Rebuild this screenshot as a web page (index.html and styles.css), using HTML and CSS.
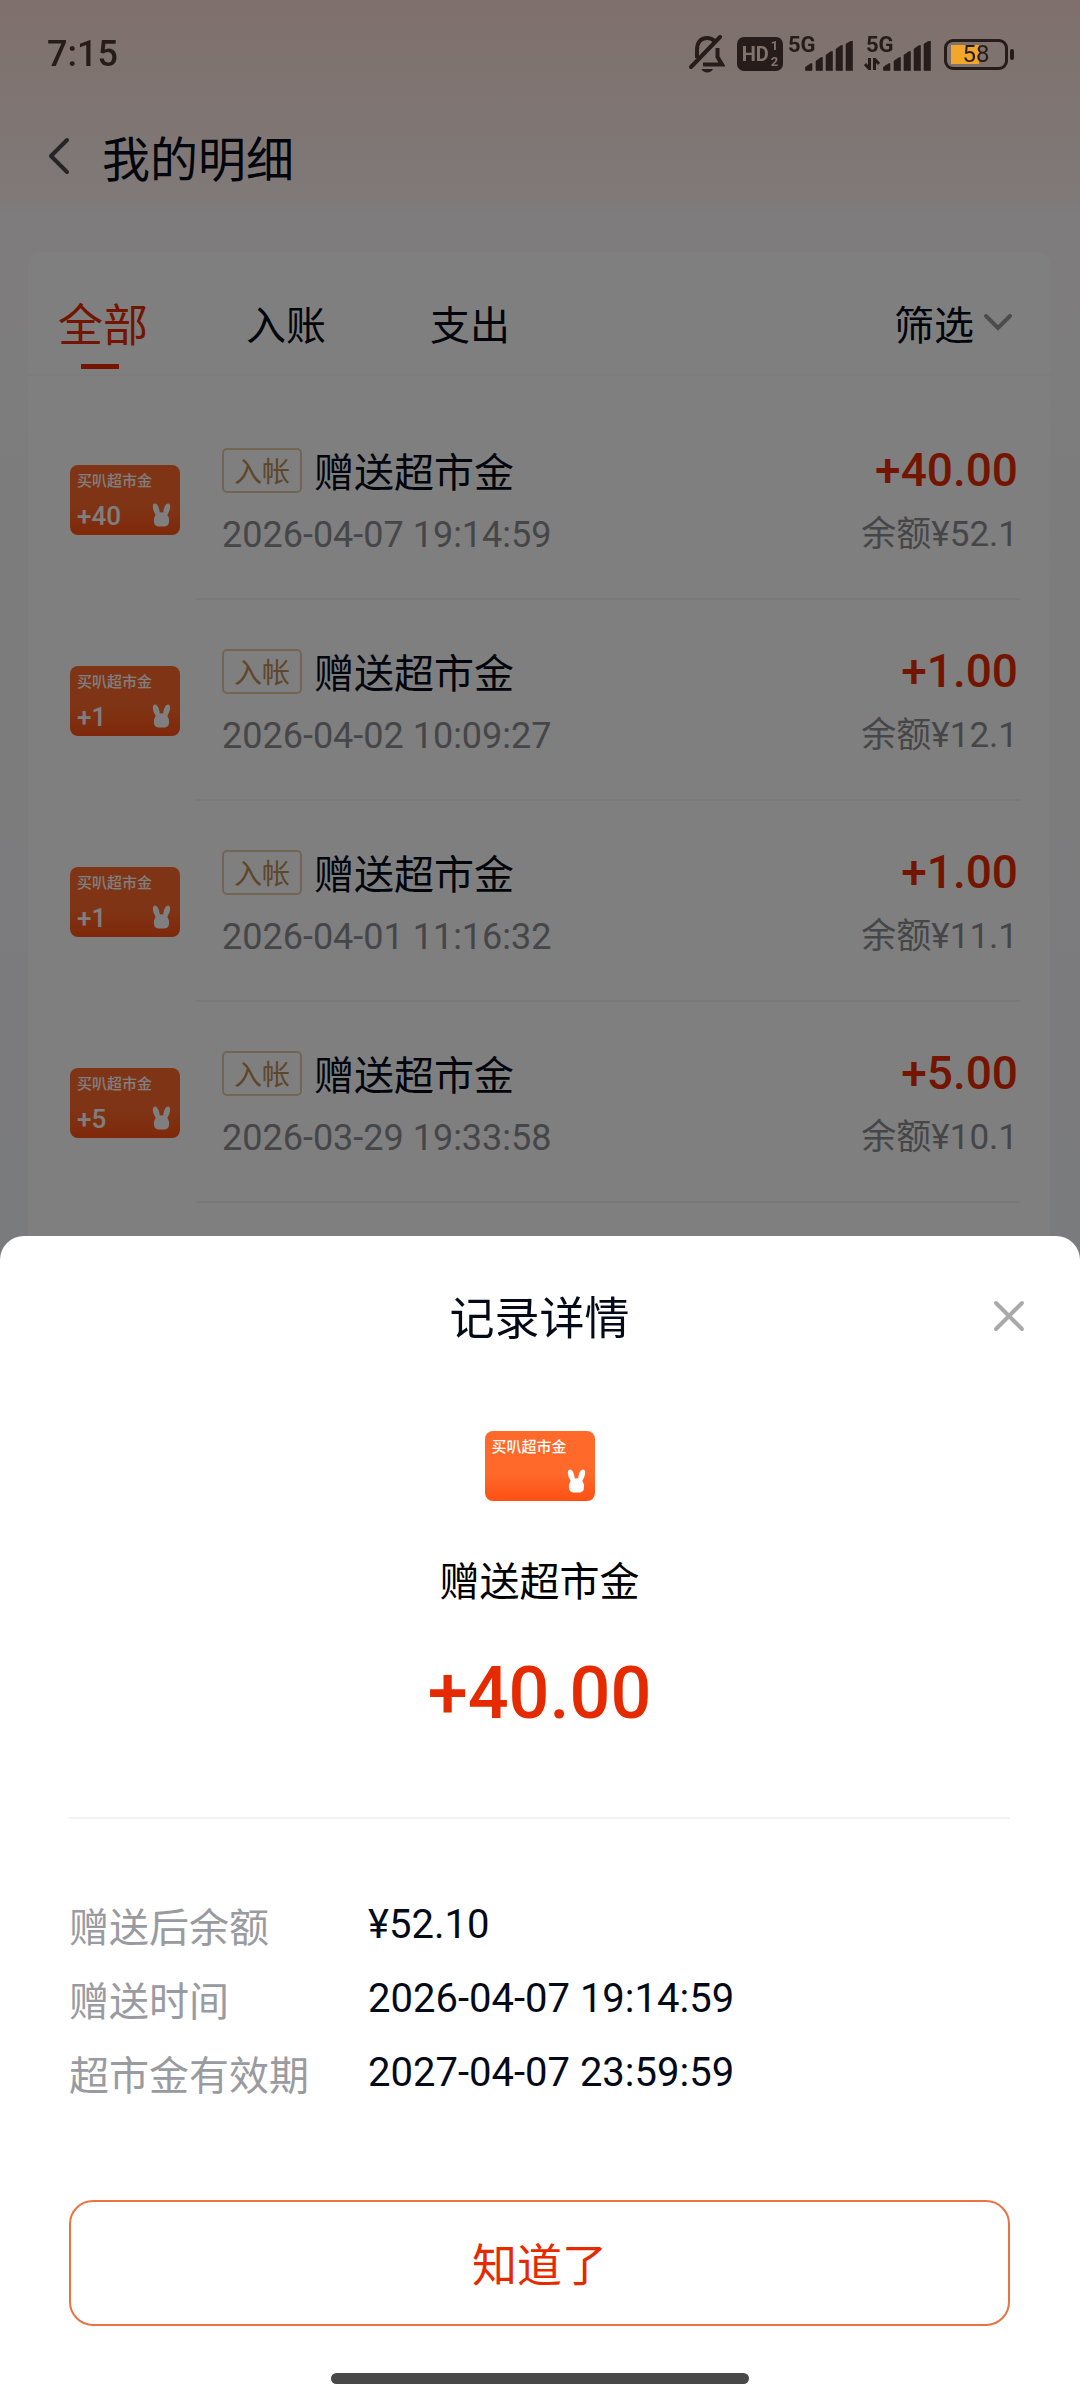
FILE: index.html
```html
<!DOCTYPE html>
<html lang="zh-CN">
<head>
  <meta charset="UTF-8" />
  <meta name="viewport" content="width=device-width, initial-scale=1.0" />
  <title>我的明细</title>
  <link rel="stylesheet" href="styles.css">
</head>
<body>
  <!-- shared shapes -->
  <svg class="sprite" aria-hidden="true">
    <symbol id="rabbit" viewBox="0 0 20 24">
      <path d="M3.200 0.600C5.600 0.200 7.600 4 8.300 9.600Q10 9 11.700 9.600C12.400 4 14.400 0.200 16.800 0.600C19.600 1.200 19.200 6.500 15.800 12C17.600 14.500 18 17 17.300 20C16.700 22.800 15 23.600 10 23.600S3.300 22.800 2.700 20C2 17 2.400 14.500 4.200 12C0.800 6.500 0.400 1.200 3.200 0.600Z" fill="#fff"/>
    </symbol>
    <symbol id="bars" viewBox="0 0 48 30">
      <path d="M0.500 29.500V26L6 22.500H7V29.500ZM11 29.500V20L16 16.500H17.500V29.500ZM21 29.500V14L26 10.500H27.500V29.500ZM31 29.500V8L36 4.500H37.500V29.500ZM41 29.500V3L46 0H47.500V29.500Z" fill="currentColor" stroke="currentColor" stroke-width="0.600"/>
    </symbol>
  </svg>

  <div class="status-bar">
    <span class="time">7:15</span>
    <div class="status-icons">
      <svg class="bell" viewBox="0 0 36 38" fill="none" stroke="currentColor" stroke-width="4">
        <path d="M8 23V15C8 7 12 3 18 3C21 3 23.500 4 25.500 6M28.500 13V22L33 29.500H14"/>
        <path d="M2 32L31 2" stroke-linecap="round"/>
        <path d="M12.500 34H24C22.500 38.500 14 38.500 12.500 34Z" fill="currentColor" stroke="none"/>
      </svg>
      <span class="hd">HD<span class="hd-nums"><span>1</span><span>2</span></span></span>
      <div class="signal">
        <span class="net">5G</span>
        <svg class="bars"><use href="#bars"/></svg>
      </div>
      <div class="signal">
        <span class="net">5G</span>
        <svg class="arrows" viewBox="0 0 16 12" fill="none" stroke="currentColor" stroke-width="3">
          <path d="M5.500 0V11L1 6M10.500 12V1L15 6"/>
        </svg>
        <svg class="bars"><use href="#bars"/></svg>
      </div>
      <div class="battery"><span class="level">58</span></div>
    </div>
  </div>

  <main class="page">
    <header class="page-header">
      <button class="back" aria-label="返回">
        <svg viewBox="0 0 22 38" fill="none" stroke="currentColor" stroke-width="4" stroke-linecap="round" stroke-linejoin="round"><path d="M19 3L3 19L19 35"/></svg>
      </button>
      <h1>我的明细</h1>
    </header>

    <section class="card">
      <nav class="tabs">
        <button class="tab active">全部</button>
        <button class="tab">入账</button>
        <button class="tab">支出</button>
        <button class="filter">筛选
          <svg viewBox="0 0 28 18" fill="none" stroke="currentColor" stroke-width="4" stroke-linecap="round"><path d="M2 2L14 14L26 2"/></svg>
        </button>
      </nav>

      <ul class="records">
        <li class="record">
          <div class="gift"><span class="gift-name">买叭超市金</span><span class="gift-num">+40</span><svg class="rabbit"><use href="#rabbit"/></svg></div>
          <div class="info">
            <div class="line"><span class="name"><span class="tag">入帐</span>赠送超市金</span><span class="amount">+40.00</span></div>
            <div class="line sub"><span>2026-04-07 19:14:59</span><span class="balance">余额¥52.1</span></div>
          </div>
        </li>
        <li class="record">
          <div class="gift"><span class="gift-name">买叭超市金</span><span class="gift-num">+1</span><svg class="rabbit"><use href="#rabbit"/></svg></div>
          <div class="info">
            <div class="line"><span class="name"><span class="tag">入帐</span>赠送超市金</span><span class="amount">+1.00</span></div>
            <div class="line sub"><span>2026-04-02 10:09:27</span><span class="balance">余额¥12.1</span></div>
          </div>
        </li>
        <li class="record">
          <div class="gift"><span class="gift-name">买叭超市金</span><span class="gift-num">+1</span><svg class="rabbit"><use href="#rabbit"/></svg></div>
          <div class="info">
            <div class="line"><span class="name"><span class="tag">入帐</span>赠送超市金</span><span class="amount">+1.00</span></div>
            <div class="line sub"><span>2026-04-01 11:16:32</span><span class="balance">余额¥11.1</span></div>
          </div>
        </li>
        <li class="record">
          <div class="gift"><span class="gift-name">买叭超市金</span><span class="gift-num">+5</span><svg class="rabbit"><use href="#rabbit"/></svg></div>
          <div class="info">
            <div class="line"><span class="name"><span class="tag">入帐</span>赠送超市金</span><span class="amount">+5.00</span></div>
            <div class="line sub"><span>2026-03-29 19:33:58</span><span class="balance">余额¥10.1</span></div>
          </div>
        </li>
      </ul>
    </section>
  </main>

  <div class="mask">
    <section class="sheet" role="dialog" aria-labelledby="sheetTitle">
      <header class="sheet-header">
        <h2 id="sheetTitle">记录详情</h2>
        <button class="close" aria-label="关闭">
          <svg viewBox="0 0 32 32" fill="none" stroke="currentColor" stroke-width="4" stroke-linecap="round"><path d="M3 3L29 29M29 3L3 29"/></svg>
        </button>
      </header>

      <div class="summary">
        <div class="gift"><span class="gift-name">买叭超市金</span><svg class="rabbit"><use href="#rabbit"/></svg></div>
        <p class="summary-name">赠送超市金</p>
        <p class="summary-amount">+40.00</p>
      </div>

      <dl class="details">
        <dt>赠送后余额</dt><dd>¥52.10</dd>
        <dt>赠送时间</dt><dd>2026-04-07 19:14:59</dd>
        <dt>超市金有效期</dt><dd>2027-04-07 23:59:59</dd>
      </dl>

      <button class="confirm">知道了</button>
      <div class="home-bar"></div>
    </section>
  </div>
</body>
</html>
```
FILE: styles.css
```css
:root {
  --red: #e62a00;
  --text: #050a18;
  --muted: #9a9ba0;
  --status: #261d1b;
  --cjk: "Noto Sans CJK SC", sans-serif;
}

* {
  box-sizing: border-box;
}

body {
  margin: 0;
  min-height: 100vh;
  overflow: hidden;
  font-family: Roboto, "Noto Sans CJK SC", sans-serif;
  color: var(--text);
  background: linear-gradient(#ffe0d9 0, #ffe9e3 90px, #fff2ef 190px, #fdf9f9 215px, #fcfafa 360px, #f5f6fa 1240px);
}

h1, h2, p, ul, dl, dd {
  margin: 0;
  padding: 0;
  font-weight: 400;
}

h1, h2, dt, .tabs, .name, .summary-name {
  font-family: var(--cjk);
}

button {
  padding: 0;
  border: none;
  background: none;
  font: inherit;
  color: inherit;
  cursor: pointer;
}

svg {
  display: block;
}

.sprite {
  display: none;
}

/* status bar */
.status-bar {
  position: relative;
  z-index: 20;
  display: flex;
  justify-content: space-between;
  align-items: center;
  height: 108px;
  padding: 0 66px 0 47px;
  color: var(--status);
}

.time {
  font-size: 36px;
  font-weight: 500;
}

.status-icons {
  display: flex;
  align-items: center;
}

.bell {
  width: 36px;
  height: 38px;
  margin-right: 12px;
}

.hd {
  display: flex;
  align-items: center;
  justify-content: center;
  gap: 2px;
  width: 46px;
  height: 34px;
  margin-right: 5px;
  border-radius: 7px;
  background: var(--status);
  color: #83736f;
  font: 700 20px/34px Roboto, sans-serif;
}

.hd-nums {
  display: flex;
  flex-direction: column;
  font-size: 13px;
  line-height: 16px;
}

.signal {
  position: relative;
  width: 65px;
  height: 34px;
  margin-right: 13px;
}

.net {
  position: absolute;
  top: 0;
  left: 0;
  font-size: 22px;
  line-height: 16px;
  font-weight: 700;
}

.bars {
  position: absolute;
  right: 0;
  bottom: 0;
  width: 48px;
  height: 30px;
}

.arrows {
  position: absolute;
  left: -2px;
  bottom: 1px;
  width: 16px;
  height: 12px;
}

.battery {
  position: relative;
  width: 64px;
  height: 31px;
  margin-right: 6px;
  border: 3px solid var(--status);
  border-radius: 9px;
  background: linear-gradient(#f2a62a, #f2a62a) 4px 3px / 28px 19px no-repeat;
}

.battery::after {
  content: "";
  position: absolute;
  top: 7px;
  right: -9px;
  width: 4px;
  height: 11px;
  border-radius: 2px;
  background: var(--status);
}

.level {
  display: block;
  text-align: center;
  font-size: 24px;
  line-height: 25px;
}

/* page under the mask */
.page-header {
  display: flex;
  align-items: center;
  gap: 32px;
  height: 96px;
  padding-left: 48px;
}

.back {
  color: #4a4a50;
}

.back svg {
  width: 22px;
  height: 38px;
}

h1 {
  font-size: 48px;
  line-height: 72px;
}

.card {
  margin: 48px 30px 0 28px;
  padding-bottom: 100px;
  border-radius: 12px;
  background: #fff;
}

.tabs {
  display: flex;
  align-items: center;
  height: 124px;
  padding: 20px 38px 0 30px;
  border-bottom: 2px solid #f8f8f8;
  font-size: 40px;
  line-height: 60px;
}

.tab {
  margin-right: 104px;
}

.tab.active {
  position: relative;
  margin-right: 98px;
  font-size: 45px;
  color: var(--red);
}

.tab.active::after {
  content: "";
  position: absolute;
  left: 50%;
  bottom: -16px;
  width: 38px;
  height: 5px;
  margin-left: -22px;
  background: var(--red);
}

.filter {
  display: flex;
  align-items: center;
  gap: 10px;
  margin-left: auto;
}

.filter svg {
  width: 28px;
  height: 18px;
  color: #999;
}

.records {
  list-style: none;
  padding: 23px 30px 0 42px;
}

.record {
  display: flex;
  align-items: center;
  gap: 16px;
  height: 201px;
}

.gift {
  position: relative;
  display: flex;
  flex-direction: column;
  justify-content: space-between;
  flex: none;
  width: 110px;
  height: 70px;
  padding: 6px 8px 6px 7px;
  border-radius: 8px;
  background: linear-gradient(#ff6a2b 60%, #ff5014);
  color: #fff;
}

.gift-name {
  font-size: 15px;
  line-height: 20px;
  font-weight: 500;
}

.gift-num {
  font-size: 26px;
  line-height: 26px;
  font-weight: 500;
}

.rabbit {
  position: absolute;
  right: 8px;
  bottom: 8px;
  width: 21px;
  height: 24px;
}

.info {
  flex: 1;
  display: flex;
  flex-direction: column;
  justify-content: center;
  gap: 9px;
  height: 201px;
  padding: 8px 2px 0 26px;
  border-bottom: 2px solid #f3f3f3;
}

.line {
  display: flex;
  justify-content: space-between;
  align-items: center;
  line-height: 56px;
}

.name {
  display: flex;
  align-items: center;
  gap: 12px;
  font-size: 40px;
}

.tag {
  width: 80px;
  border: 2px solid #e4cba8;
  border-radius: 5px;
  text-align: center;
  font-size: 28px;
  line-height: 41px;
  color: #bd8d55;
}

.amount {
  font-size: 46px;
  font-weight: 500;
  color: var(--red);
}

.sub {
  font-size: 36px;
  color: #8c8d92;
}

.balance {
  font-size: 35px;
}

/* bottom sheet */
.mask {
  position: fixed;
  inset: 0;
  z-index: 10;
  display: flex;
  align-items: flex-end;
  background: rgba(0, 0, 0, 0.5);
}

.sheet {
  flex: 1;
  padding: 0 70px 16px 69px;
  border-radius: 24px 24px 0 0;
  background: #fff;
}

.sheet-header {
  position: relative;
  text-align: center;
}

h2 {
  font-size: 45px;
  line-height: 160px;
}

.close {
  position: absolute;
  top: 64px;
  right: -15px;
  color: #aaa;
}

.close svg {
  width: 32px;
  height: 32px;
}

.summary {
  display: flex;
  flex-direction: column;
  align-items: center;
  padding: 35px 0 75px;
  border-bottom: 2px solid #f3f3f3;
}

.summary-name {
  margin-top: 48px;
  font-size: 40px;
  line-height: 60px;
  color: #000;
}

.summary-amount {
  margin-top: 37px;
  font-size: 72px;
  line-height: 96px;
  font-weight: 500;
  color: var(--red);
}

.details {
  display: grid;
  grid-template-columns: 299px 1fr;
  padding: 69px 0 90px;
  font-size: 40px;
  line-height: 74px;
}

.details dt {
  color: var(--muted);
}

.confirm {
  display: block;
  width: 100%;
  height: 126px;
  border: 2px solid #ea7340;
  border-radius: 24px;
  font-family: var(--cjk);
  font-size: 45px;
  line-height: 120px;
  color: var(--red);
}

.home-bar {
  width: 418px;
  height: 11px;
  margin: 47px auto 0;
  border-radius: 6px;
  background: #484848;
}
```
